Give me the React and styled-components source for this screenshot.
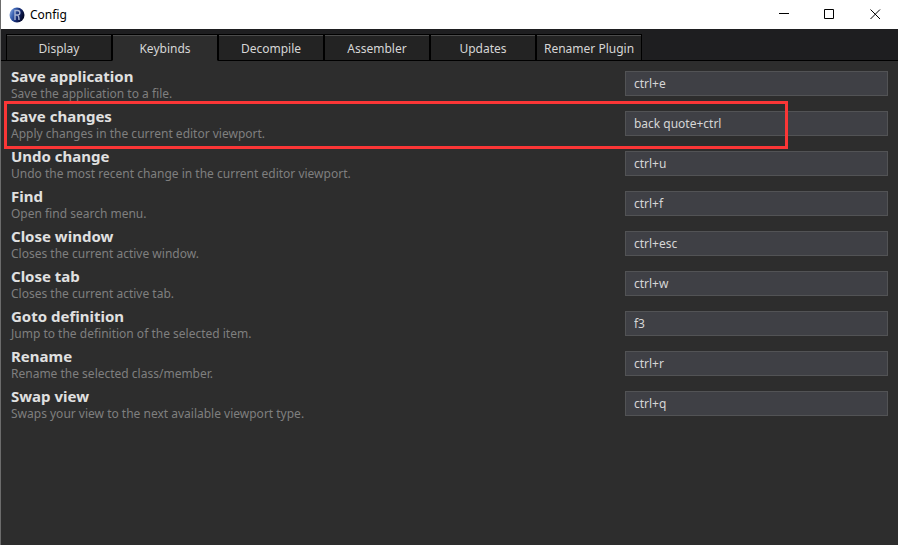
import React, { useState } from "react";
import styled, { createGlobalStyle, css } from "styled-components";

const GlobalStyle = createGlobalStyle`
  *, *::before, *::after { box-sizing: border-box; }
  body {
    margin: 0;
    background: #2d2d2d;
    font-family: "Noto Sans", "Open Sans", sans-serif;
    font-size: 12px;
  }
`;

const Window = styled.div`
  display: flex;
  flex-direction: column;
  min-height: 100vh;
  background: #2d2d2d;
  border-left: 1px solid #6c6c6c;
`;

const TitleBar = styled.header`
  display: flex;
  align-items: center;
  height: 29px;
  padding-left: 8px;
  background: #ffffff;
  color: #000000;
`;

const Title = styled.h1`
  flex: 1;
  margin: 0 0 0 5px;
  font-size: 12px;
  font-weight: 400;
  line-height: 16px;
`;

const WindowButton = styled.button`
  display: flex;
  align-items: center;
  justify-content: center;
  width: 46px;
  height: 28px;
  padding: 0;
  border: 0;
  background: transparent;
  color: #000000;
  &:hover { background: #e5e5e5; }
`;

const TabBar = styled.nav`
  display: flex;
  align-items: flex-end;
  height: 32px;
  padding-left: 5px;
  background: #1e1e20;
  box-shadow: inset 0 -1px 0 #000000;
`;

const Tab = styled.button`
  width: 106px;
  height: 27px;
  padding: 1px 0 0;
  border: 1px solid #000000;
  background: #232323;
  box-shadow: inset 0 1px 0 #4b4b4b;
  color: #d6d6d6;
  font: inherit;
  font-size: 12px;
  white-space: nowrap;
  ${(p) =>
    p.$active &&
    css`
      background: #2d2d2d;
      border-bottom-color: #2d2d2d;
    `}
`;

const BindList = styled.main`
  flex: 1;
  padding: 3px 10px;
`;

const BindRow = styled.div`
  position: relative;
  display: grid;
  grid-template-columns: 7fr 3fr;
  align-items: center;
  height: 40px;
`;

const BindLabel = styled.label`
  display: flex;
  flex-direction: column;
  white-space: nowrap;
`;

const BindName = styled.span`
  color: #e0e0e0;
  font-size: 15px;
  font-weight: 700;
  line-height: 20px;
`;

const BindHint = styled.span`
  color: #7f7f7f;
  font-size: 12px;
  line-height: 16px;
`;

const BindInput = styled.input`
  width: 100%;
  min-width: 0;
  height: 25px;
  margin: 0 0 1px;
  padding: 0 8px;
  border: 1px solid #525355;
  border-radius: 0;
  background: #3f4045;
  color: #d6d6d6;
  font: inherit;
  font-size: 12px;
  outline: none;
`;

const Highlight = styled.div`
  position: absolute;
  inset: -3px 100px -5px -7px;
  border: 3px solid #fb3636;
  pointer-events: none;
`;

const tabs = ["Display", "Keybinds", "Decompile", "Assembler", "Updates", "Renamer Plugin"];

const binds = [
  { id: "save-app", name: "Save application", hint: "Save the application to a file.", keys: "ctrl+e" },
  { id: "save", name: "Save changes", hint: "Apply changes in the current editor viewport.", keys: "back quote+ctrl", marked: true },
  { id: "undo", name: "Undo change", hint: "Undo the most recent change in the current editor viewport.", keys: "ctrl+u" },
  { id: "find", name: "Find", hint: "Open find search menu.", keys: "ctrl+f" },
  { id: "close-window", name: "Close window", hint: "Closes the current active window.", keys: "ctrl+esc" },
  { id: "close-tab", name: "Close tab", hint: "Closes the current active tab.", keys: "ctrl+w" },
  { id: "goto", name: "Goto definition", hint: "Jump to the definition of the selected item.", keys: "f3" },
  { id: "rename", name: "Rename", hint: "Rename the selected class/member.", keys: "ctrl+r" },
  { id: "swap", name: "Swap view", hint: "Swaps your view to the next available viewport type.", keys: "ctrl+q" },
];

function AppIcon() {
  return (
    <svg width="16" height="16" viewBox="0 0 16 16" aria-hidden="true">
      <defs>
        <linearGradient id="orb" x1="0" y1="0" x2="1" y2="0.4">
          <stop offset="0" stopColor="#a5c0ee" />
          <stop offset="0.35" stopColor="#3c64b4" />
          <stop offset="0.7" stopColor="#122468" />
          <stop offset="1" stopColor="#060b2b" />
        </linearGradient>
      </defs>
      <circle cx="8" cy="8" r="7.5" fill="url(#orb)" />
      <path d="M6 13V3.5h2.6a1.9 1.9 0 0 1 0 4.5H6M8.6 8q1.4 1 1.4 5" fill="none" stroke="#a9b5d2" strokeWidth="1.4" />
    </svg>
  );
}

function WindowGlyph({ d }) {
  return (
    <svg width="11" height="11" viewBox="0 0 11 11" aria-hidden="true">
      <path d={d} fill="none" stroke="currentColor" />
    </svg>
  );
}

export default function App() {
  const [active, setActive] = useState("Keybinds");
  const [keys, setKeys] = useState(() => Object.fromEntries(binds.map((b) => [b.id, b.keys])));

  return (
    <>
      <GlobalStyle />
      <Window>
        <TitleBar>
          <AppIcon />
          <Title>Config</Title>
          <WindowButton aria-label="Minimize"><WindowGlyph d="M1 4.5h10" /></WindowButton>
          <WindowButton aria-label="Maximize"><WindowGlyph d="M.5.5h9v9h-9z" /></WindowButton>
          <WindowButton aria-label="Close"><WindowGlyph d="M.5.5l9.5 9.5M10 .5L.5 10" /></WindowButton>
        </TitleBar>
        <TabBar role="tablist">
          {tabs.map((t) => (
            <Tab key={t} role="tab" aria-selected={t === active} $active={t === active} onClick={() => setActive(t)}>
              {t}
            </Tab>
          ))}
        </TabBar>
        <BindList>
          {binds.map((b) => (
            <BindRow key={b.id}>
              <BindLabel htmlFor={b.id}>
                <BindName>{b.name}</BindName>
                <BindHint>{b.hint}</BindHint>
              </BindLabel>
              <BindInput
                id={b.id}
                value={keys[b.id]}
                onChange={(e) => setKeys({ ...keys, [b.id]: e.target.value })}
              />
              {b.marked && <Highlight />}
            </BindRow>
          ))}
        </BindList>
      </Window>
    </>
  );
}
